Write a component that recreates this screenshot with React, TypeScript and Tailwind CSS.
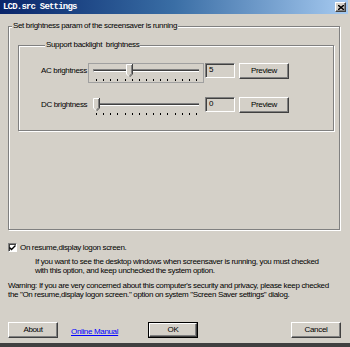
import React from "react";

const raised =
  "border border-t-white border-l-white border-b-[#404040] border-r-[#404040] shadow-[inset_-1px_-1px_0_#808080] bg-[#d4d0c8]";

function Btn({ label, isDefault = false }: { label: string; isDefault?: boolean }) {
  if (isDefault) {
    return (
      <div className="w-[50px] h-[16px] border border-black">
        <div className={`w-full h-full flex items-center justify-center ${raised}`}>{label}</div>
      </div>
    );
  }
  return (
    <div className={`w-[50px] h-[16px] flex items-center justify-center ${raised}`}>{label}</div>
  );
}

function Thumb() {
  return (
    <svg width="7" height="14" viewBox="0 0 7 14">
      <polygon points="0,0 7,0 7,10 3.5,13.5 0,10" fill="#d4d0c8" />
      <polyline points="0.5,10 0.5,0.5 6,0.5" fill="none" stroke="#fff" />
      <polyline points="6.5,0 6.5,10 3.5,13" fill="none" stroke="#404040" />
      <polyline points="5.5,1 5.5,9.7 3.5,11.8" fill="none" stroke="#808080" />
      <line x1="0.5" y1="10" x2="3" y2="12.5" stroke="#fff" />
    </svg>
  );
}

function TrackBar({ thumbLeft, focused }: { thumbLeft: number; focused: boolean }) {
  const ticks = Array.from({ length: 15 });
  return (
    <div
      className={`relative w-[116px] h-[20px] border pt-[5px] ${
        focused ? "border-[#a0a0a0]" : "border-transparent"
      }`}
    >
      <div className="ml-[4px] w-[106px] h-[3px] border-t border-l border-[#808080] border-b border-b-white bg-[#404040]" />
      <div className="ml-[7px] mt-[7px] w-[101px] h-[2px] flex justify-between">
        {ticks.map((_, i) => (
          <div key={i} className="w-[1px] h-full bg-black" />
        ))}
      </div>
      <div className="absolute top-0" style={{ left: thumbLeft }}>
        <Thumb />
      </div>
    </div>
  );
}

function EditBox({ value }: { value: string }) {
  return (
    <div className="w-[30px] h-[15px] border border-t-[#808080] border-l-[#808080] border-b-white border-r-white shadow-[inset_1px_1px_0_#404040] pl-[3px] pt-[1px] leading-[10px]">
      {value}
    </div>
  );
}

function Row({ label, value, thumbLeft, focused }: { label: string; value: string; thumbLeft: number; focused: boolean }) {
  return (
    <div className="flex items-start">
      <div className="w-[47px] leading-[15px] whitespace-nowrap">{label}</div>
      <TrackBar thumbLeft={thumbLeft} focused={focused} />
      <div className="ml-[1px]">
        <EditBox value={value} />
      </div>
      <div className="ml-[4px]">
        <Btn label="Preview" />
      </div>
    </div>
  );
}

export default function App() {
  return (
    <div className="w-[350px] h-[347px] bg-[#d4d0c8] flex flex-col text-[8px] tracking-[-0.34px] text-black font-['Liberation_Sans',Arial,sans-serif] border-b-[4px] border-b-[#404040] overflow-hidden">
      {/* title bar */}
      <div className="h-[14px] mr-[2px] flex items-center justify-between bg-gradient-to-r from-[#0a246a] via-[#3a6ea5] to-[#a6caf0]">
        <span className="pl-[3px] text-white font-bold text-[9px] tracking-[-0.8px] font-['Liberation_Mono',monospace] leading-[10px]">
          LCD.src Settings
        </span>
        <div className={`mr-[2px] w-[11px] h-[10px] flex items-center justify-center ${raised}`}>
          <svg width="6" height="5" viewBox="0 0 6 5">
            <path d="M0 0 L6 5 M6 0 L0 5" stroke="#000" strokeWidth="1.4" />
          </svg>
        </div>
      </div>

      {/* outer group */}
      <fieldset className="mt-[7px] ml-[8px] w-[332px] border border-[#808080] shadow-[inset_1px_1px_0_#fff,1px_1px_0_#fff] pb-[98px]">
        <legend className="ml-[3px] px-[1px] leading-[10px] bg-[#d4d0c8]">
          Set brightness param of the screensaver is running
        </legend>
        <fieldset className="mt-[9px] ml-[9px] mr-[5px] border border-[#808080] shadow-[inset_1px_1px_0_#fff,1px_1px_0_#fff] pt-[13px] pl-[22px] pb-[13px]">
          <legend className="ml-[4px] px-[1px] leading-[10px] bg-[#d4d0c8] whitespace-pre">
            Support backlight  brightness
          </legend>
          <Row label="AC brightness" value="5" thumbLeft={37} focused />
          <div className="mt-[14px]">
            <Row label="DC brightness" value="0" thumbLeft={4} focused={false} />
          </div>
        </fieldset>
      </fieldset>

      {/* logon option */}
      <div className="mt-[13px] ml-[8px] flex items-center gap-[3px]">
        <div className="w-[9px] h-[9px] bg-white border border-t-[#808080] border-l-[#808080] border-b-white border-r-white shadow-[inset_1px_1px_0_#404040] flex items-center justify-center">
          <svg width="7" height="6" viewBox="0 0 7 6">
            <path d="M0.5 2.5 L2.5 4.5 L6.5 0.5" fill="none" stroke="#000" strokeWidth="1.4" />
          </svg>
        </div>
        <span className="leading-[9px]">On resume,display logon screen.</span>
      </div>

      <div className="mt-[5px] ml-[35px] leading-[9px] whitespace-nowrap">
        <div>If you want to see the desktop windows when screensaver is running, you must checked</div>
        <div>with this option, and keep unchecked the system option.</div>
      </div>

      <div className="mt-[6px] ml-[8px] leading-[9px] whitespace-nowrap">
        <div>Warning: If you are very concerned about this computer's security and privacy, please keep checked</div>
        <div>the "On resume,display logon screen." option on system "Screen Saver settings" dialog.</div>
      </div>

      {/* buttons */}
      <div className="mt-[23px] ml-[8px] mr-[9px] flex items-end">
        <Btn label="About" />
        <div className="w-[90px] pl-[13px]">
          <span className="text-[#0000ff] underline leading-[9px] whitespace-nowrap">Online Manual</span>
        </div>
        <Btn label="OK" isDefault />
        <div className="ml-auto">
          <Btn label="Cancel" />
        </div>
      </div>
    </div>
  );
}
